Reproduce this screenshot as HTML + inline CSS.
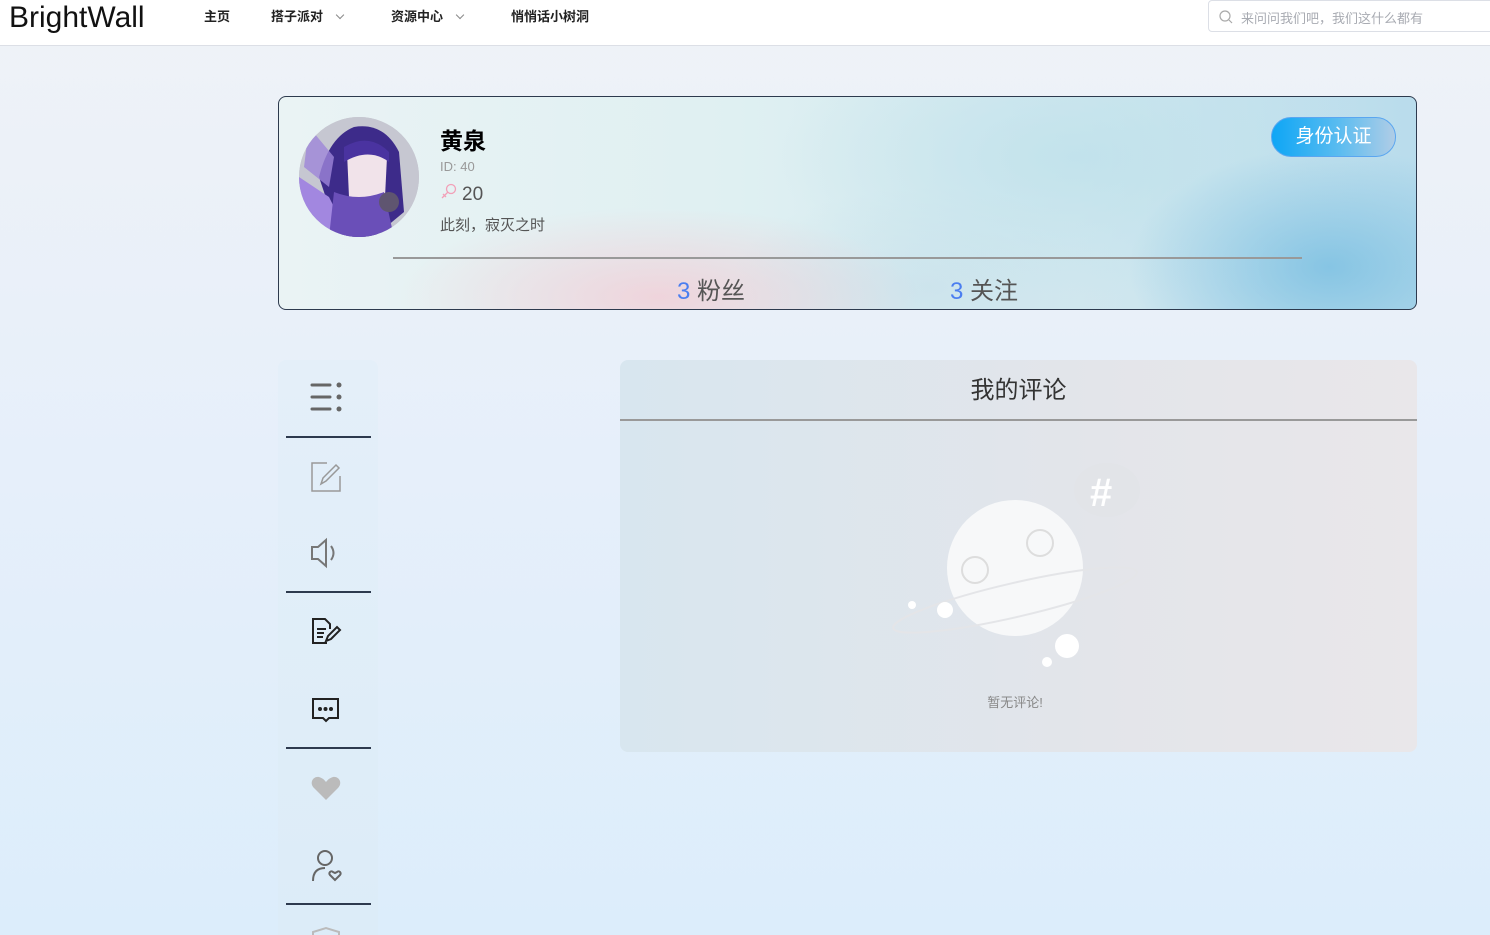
<!DOCTYPE html>
<html><head><meta charset="utf-8"><style>
*{margin:0;padding:0;box-sizing:border-box}
html,body{width:1490px;height:935px;overflow:hidden}
body{font-family:"Liberation Sans","Noto Sans CJK SC",sans-serif;background:linear-gradient(180deg,#eff2f7 0%,#e6effa 50%,#dcedfb 100%);position:relative}
.hdr{position:absolute;left:0;top:0;width:1490px;height:46px;background:#fff;border-bottom:1px solid #dcdfe6}
.logo{position:absolute;left:9px;top:0;font-size:30px;color:#111;line-height:36px}
.nav{position:absolute;top:6px;font-size:13px;font-weight:bold;color:#222}
.chev{display:inline-block;width:6px;height:6px;border-right:1px solid #888;border-bottom:1px solid #888;transform:rotate(45deg);margin-left:14px;position:relative;top:-3px}
.search{position:absolute;left:1208px;top:0;width:290px;height:32px;border:1px solid #dcdfe6;border-radius:4px;font-size:13px;color:#a8abb2;padding:7px 0 0 32px}
.search svg{position:absolute;left:10px;top:9px}
.banner{position:absolute;left:278px;top:96px;width:1139px;height:214px;border:1px solid #2d3a4e;border-radius:8px;overflow:hidden;
background:
radial-gradient(ellipse 260px 90px at 380px 200px,rgba(245,200,210,.7),transparent),
radial-gradient(ellipse 200px 120px at 1050px 170px,rgba(120,190,225,.8),transparent),
radial-gradient(ellipse 300px 140px at 800px 60px,rgba(190,225,235,.8),transparent),
radial-gradient(ellipse 200px 100px at 650px 190px,rgba(200,225,235,.7),transparent),
linear-gradient(90deg,#eaf3f4,#dff0f2 40%,#d2e8ef 70%,#b9dcec)}
.av{position:absolute;left:20px;top:20px;width:120px;height:120px;border-radius:50%;overflow:hidden;background:#c4c5cf}
.name{position:absolute;left:161px;top:25px;font-size:23px;font-weight:bold;color:#000}
.id{position:absolute;left:161px;top:62px;font-size:13px;color:#999}
.age{position:absolute;left:161px;top:86px;font-size:19px;color:#555}
.sig{position:absolute;left:161px;top:117px;font-size:15px;color:#555}
.hr{position:absolute;left:114px;top:160px;width:909px;height:2px;background:#999}
.cnt{position:absolute;top:174px;font-size:24px;color:#555}
.cnt b{font-weight:normal;color:#4b7ef0}
.btn{position:absolute;left:992px;top:20px;width:125px;height:40px;border-radius:20px;border:1px solid #5aa6f0;background:linear-gradient(90deg,#0ea6f5,#5bbcf0 55%,#b0cde6);color:#fff;font-size:19px;text-align:center;line-height:38px}
.side{position:absolute;left:278px;top:360px;width:100px;height:575px;border-radius:8px 8px 0 0;background:linear-gradient(180deg,#e4eff9,#dcecf8)}
.sl{position:absolute;left:8px;width:85px;height:2px;background:#2d3a4e}
.ic{position:absolute;left:31px}
.panel{position:absolute;left:620px;top:360px;width:797px;height:392px;border-radius:8px;background:linear-gradient(90deg,#d8e6ef,#e3e5ea 60%,#e9e7ea)}
.pt{position:absolute;left:0;top:0;width:100%;height:61px;border-bottom:2px solid #999;text-align:center;font-size:24px;line-height:62px;color:#333}
.empty{position:absolute;left:0;top:332px;width:790px;text-align:center;font-size:13px;color:#888}
</style></head><body>
<div class="hdr">
<div class="logo">BrightWall</div>
<div class="nav" style="left:204px">主页</div>
<div class="nav" style="left:271px">搭子派对<span class="chev"></span></div>
<div class="nav" style="left:391px">资源中心<span class="chev"></span></div>
<div class="nav" style="left:511px">悄悄话小树洞</div>
<div class="search"><svg width="14" height="14" viewBox="0 0 14 14"><circle cx="6" cy="6" r="5" fill="none" stroke="#aaa" stroke-width="1.2"/><path d="M10 10l3 3" stroke="#aaa" stroke-width="1.2"/></svg>来问问我们吧，我们这什么都有</div>
</div>
<div class="banner">
<div class="av"><svg width="120" height="120" viewBox="0 0 120 120">
<rect width="120" height="120" fill="#c6c7d1"/>
<path d="M55 10q30-5 45 25l5 60-30 25H40L20 60q10-40 35-50z" fill="#3d2b8a"/>
<path d="M48 35q20-10 40 5l-2 40q-18 12-36 0z" fill="#f1e3ea"/>
<path d="M45 30q25-15 45 5l0 10q-20-15-45 0z" fill="#4a33a0"/>
<path d="M0 60l30 20 20 40H0z" fill="#a287e0"/>
<path d="M10 10l25 30-5 30-25-20z" fill="#9d86d8" opacity=".8"/>
<path d="M35 75q25 10 50 0l10 45H30z" fill="#6a4fb8"/>
<circle cx="90" cy="85" r="10" fill="#5f5570"/>
</svg></div>
<div class="name">黄泉</div>
<div class="id">ID: 40</div>
<div class="age"><svg width="18" height="18" viewBox="0 0 18 18" style="vertical-align:-1px;margin-right:4px"><circle cx="11" cy="6" r="4.5" fill="none" stroke="#f2a0b8" stroke-width="1.3"/><path d="M8 9L2 15M3 11l3 3" stroke="#f2a0b8" stroke-width="1.3"/></svg>20</div>
<div class="sig">此刻，寂灭之时</div>
<div class="hr"></div>
<div class="cnt" style="left:398px"><b>3</b> 粉丝</div>
<div class="cnt" style="left:671px"><b>3</b> 关注</div>
<div class="btn">身份认证</div>
</div>
<div class="side">
<svg class="ic" style="top:22px" width="34" height="32" viewBox="0 0 34 32"><g stroke="#666" stroke-width="3" stroke-linecap="round"><path d="M3 3h18M3 15h18M3 27h18"/></g><g fill="#666"><circle cx="30" cy="3" r="2.5"/><circle cx="30" cy="15" r="2.5"/><circle cx="30" cy="27" r="2.5"/></g></svg>
<div class="sl" style="top:76px"></div>
<svg class="ic" style="top:100px" width="34" height="34" viewBox="0 0 34 34" fill="none" stroke="#999" stroke-width="1.5"><path d="M18 3H3v28h28V16"/><path d="M12 24l2-6L27 5l3 3-13 13z"/></svg>
<svg class="ic" style="top:176px" width="34" height="34" viewBox="0 0 34 34" fill="none" stroke="#777" stroke-width="2"><path d="M3 11h6l8-7v26l-8-7H3z"/><path d="M22 10q5 7 0 14"/></svg>
<div class="sl" style="top:231px"></div>
<svg class="ic" style="top:256px" width="34" height="30" viewBox="0 0 34 30" fill="none" stroke="#222" stroke-width="2"><path d="M18 27H4V3h12l5 5v5"/><path d="M8 13h9M8 17h7M8 21h6"/><path d="M17 25l2-5 9-9 3 3-9 9z"/></svg>
<svg class="ic" style="top:335px" width="34" height="30" viewBox="0 0 34 30" fill="none" stroke="#222" stroke-width="2"><path d="M4 4h25v19H20l-3 3-3-3H4z"/><circle cx="11" cy="14" r="1" fill="#222"/><circle cx="16.5" cy="14" r="1" fill="#222"/><circle cx="22" cy="14" r="1" fill="#222"/></svg>
<div class="sl" style="top:387px"></div>
<svg class="ic" style="top:413px" width="34" height="30" viewBox="0 0 34 30"><path d="M17 27L5 15C0 10 4 3 10 4q4 1 7 5q3-4 7-5c6-1 10 6 5 11z" fill="#bbb"/></svg>
<svg class="ic" style="top:488px" width="34" height="36" viewBox="0 0 34 36" fill="none" stroke="#666" stroke-width="2"><circle cx="16" cy="10" r="7"/><path d="M4 33q0-13 12-13"/><path d="M26 32l-5-5c-2-2 1-5 3-3l2 1 2-1c2-2 5 1 3 3z"/></svg>
<div class="sl" style="top:543px"></div>
<svg class="ic" style="top:566px" width="34" height="12" viewBox="0 0 34 12" fill="none" stroke="#bbb" stroke-width="2"><path d="M4 10V6l13-4 13 4v4"/></svg>
</div>
<div class="panel">
<div class="pt">我的评论</div>
<svg style="position:absolute;left:270px;top:100px" width="250" height="215" viewBox="0 0 250 215">
<ellipse cx="217" cy="30" rx="33" ry="27" fill="#e2e4e8"/>
<text x="200" y="46" font-size="40" font-weight="bold" fill="#fff" font-family="Liberation Sans">#</text>
<circle cx="125" cy="108" r="68" fill="#f7f8f9"/>
<circle cx="85" cy="110" r="13" fill="none" stroke="#ddd" stroke-width="2"/>
<circle cx="150" cy="83" r="13" fill="none" stroke="#ddd" stroke-width="2"/>
<ellipse cx="125" cy="140" rx="125" ry="17" transform="rotate(-13 125 140)" fill="none" stroke="#e4e5e8" stroke-width="2"/>
<circle cx="55" cy="150" r="8" fill="#fff"/><circle cx="22" cy="145" r="4" fill="#fff"/>
<circle cx="177" cy="186" r="12" fill="#fff"/><circle cx="157" cy="202" r="5" fill="#fff"/>
</svg>
<div class="empty">暂无评论!</div>
</div>
</body></html>
